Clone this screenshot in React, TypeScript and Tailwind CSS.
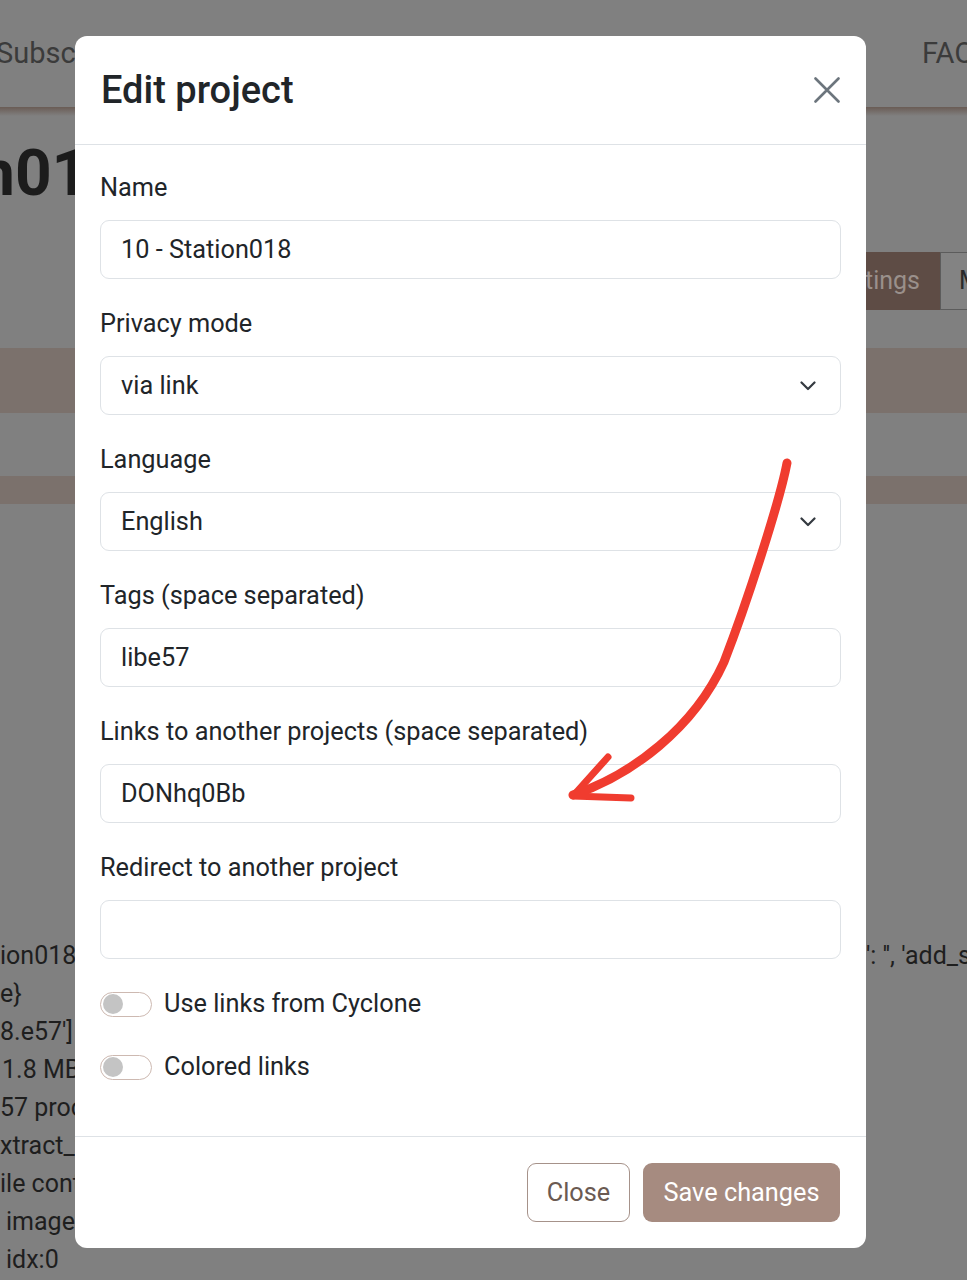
import React from "react";

function Field({ label, value, select }: { label: string; value: string; select?: boolean }) {
  return (
    <div className="mb-[27px] flex flex-col">
      <div className="h-[36px] leading-[36px] text-[25.3px] text-[#212529]">{label}</div>
      <div className="mt-[14px] flex h-[59px] items-center justify-between rounded-[9px] border border-[#dee2e6] bg-white pl-[20px] pr-[24px] text-[25.3px] text-[#212529]">
        <span>{value}</span>
        {select && (
          <svg width="16" height="10" viewBox="0 0 16 10" fill="none">
            <path d="M1.5 1.5 L8 8 L14.5 1.5" stroke="#343a40" strokeWidth="2.2" strokeLinecap="round" strokeLinejoin="round" />
          </svg>
        )}
      </div>
    </div>
  );
}

function Toggle({ label }: { label: string }) {
  return (
    <div className="mb-[27px] flex h-[36px] items-center gap-[12px]">
      <div className="flex h-[25px] w-[52px] items-center rounded-full border border-[#cdb9b1] bg-white pl-[2px]">
        <div className="h-[20px] w-[20px] rounded-full bg-[#c4c4c4]" />
      </div>
      <span className="text-[25.3px] text-[#212529]">{label}</span>
    </div>
  );
}

export default function App() {
  const lines: [string, string, string][] = [
    ["ion018", "': '', 'add_s", "pl-0"],
    ["e}", "", "pl-0"],
    ["8.e57']", "", "pl-0"],
    ["1.8 MB", "", "pl-[2px]"],
    ["57 proc", "", "pl-0"],
    ["xtract_f", "", "pl-0"],
    ["ile cont", "", "pl-0"],
    ["image", "", "pl-[6px]"],
    ["idx:0", "", "pl-[6px]"],
  ];
  return (
    <div className="relative h-[1280px] w-[967px] overflow-hidden bg-[#808080] [font-family:Roboto,'Noto_Sans',sans-serif]">
      {/* background page (dimmed) */}
      <div className="flex flex-col">
        <div className="flex h-[107px] items-center text-[29px] text-[#3b3b3b]">
          <div className="w-[922px] shrink-0 overflow-hidden whitespace-nowrap">
            <span className="ml-[-4px] inline-block">Subscriptions</span>
          </div>
          <div className="shrink-0 whitespace-nowrap">FAQ</div>
        </div>
        <div className="h-[9px] bg-gradient-to-b from-[#6a5c55] to-[#808080]" />
        <div className="mt-[19px] h-[77px] whitespace-nowrap text-[64px] font-bold leading-[77px] text-[#1c1c1c]">
          <span className="ml-[-21px] inline-block">n018</span>
        </div>
        <div className="mt-[40px] flex h-[58px] pl-[780px] text-[25px]">
          <div className="flex w-[160px] shrink-0 items-center justify-end bg-[#5e4c45] pr-[20px] text-[#9a908b]">Settings</div>
          <div className="flex w-[80px] shrink-0 items-center border border-[#5c5c5c] bg-[#838383] pl-[18px] text-[#2a2a2a]">More</div>
        </div>
        <div className="mt-[38px] h-[65px] bg-[#7b716c]" />
        <div className="mt-[63px] h-[28px] bg-[#7b716c]" />
        <div className="mt-[433px] flex flex-col text-[25px] leading-[38px] text-[#1e1e1e]">
          {lines.map(([l, r, p], i) => (
            <div key={i} className="flex whitespace-nowrap">
              <div className={`w-[866px] shrink-0 ${p}`}>{l}</div>
              <div>{r}</div>
            </div>
          ))}
        </div>
      </div>

      {/* modal */}
      <div className="absolute left-[75px] top-[36px] flex h-[1212px] w-[791px] flex-col rounded-[12px] bg-white">
        <div className="flex h-[109px] items-center justify-between border-b border-[#dee2e6] pl-[26px] pr-[26px]">
          <div className="text-[38px] font-medium text-[#212529]">Edit project</div>
          <svg width="26" height="26" viewBox="0 0 26 26" fill="none">
            <path d="M1.5 1.5 L24.5 24.5 M24.5 1.5 L1.5 24.5" stroke="#6c757d" strokeWidth="2.6" strokeLinecap="round" />
          </svg>
        </div>
        <div className="flex flex-1 flex-col px-[25px] pt-[25px]">
          <Field label="Name" value="10 - Station018" />
          <Field label="Privacy mode" value="via link" select />
          <Field label="Language" value="English" select />
          <Field label="Tags (space separated)" value="libe57" />
          <Field label="Links to another projects (space separated)" value="DONhq0Bb" />
          <Field label="Redirect to another project" value="" />
          <Toggle label="Use links from Cyclone" />
          <Toggle label="Colored links" />
        </div>
        <div className="flex h-[112px] items-center justify-end gap-[13px] border-t border-[#dee2e6] pr-[26px]">
          <button className="flex h-[59px] w-[103px] items-center justify-center rounded-[9px] border border-[#a6928a] bg-white text-[25.3px] text-[#6b5a52]">
            Close
          </button>
          <button className="flex h-[59px] w-[197px] items-center justify-center rounded-[9px] bg-[#a68b80] text-[25.3px] text-white">
            Save changes
          </button>
        </div>
      </div>

      {/* red annotation arrow */}
      <svg className="pointer-events-none absolute left-0 top-0" width="967" height="1280" viewBox="0 0 967 1280" fill="none">
        <path
          d="M787 463 C780 500 748 600 724 662 C694 728 632 775 573 795"
          stroke="#f03c2f"
          strokeWidth="9"
          strokeLinecap="round"
          strokeLinejoin="round"
        />
        <path d="M608 757 L573 796 L631 798" stroke="#f03c2f" strokeWidth="7" strokeLinecap="round" strokeLinejoin="round" />
      </svg>
    </div>
  );
}
